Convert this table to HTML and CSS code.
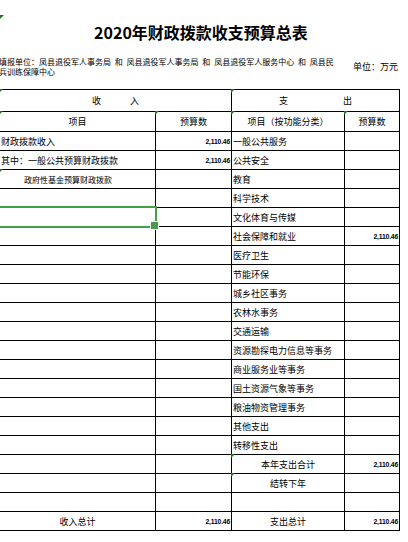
FILE: index.html
```html
<!DOCTYPE html>
<html lang="zh-CN">
<head>
<meta charset="utf-8">
<title>2020年财政拨款收支预算总表</title>
<link rel="stylesheet" href="styles.css">
</head>
<body>
<div class="sheet">
  <header class="head">
    <span class="mark"></span>
    <h1 class="title">2020年财政拨款收支预算总表</h1>
    <div class="info">
      <p class="unit-name">填报单位：凤县退役军人事务局 和 凤县退役军人事务局 和 凤县退役军人服务中心 和 凤县民<br>兵训练保障中心</p>
      <p class="unit">单位：万元</p>
    </div>
  </header>

  <div class="grid">
    <div class="c span2 hd tri"><span>收</span><span class="gap1">入</span></div>
    <div class="c span2 hd tri"><span>支</span><span class="gap2">出</span></div>

    <div class="c hd tri">项目</div>
    <div class="c hd tri">预算数</div>
    <div class="c hd tri">项目（按功能分类）</div>
    <div class="c hd tri">预算数</div>

    <div class="c l">财政拨款收入</div><div class="c num">2,110.46</div><div class="c l">一般公共服务</div><div class="c"></div>
    <div class="c l">其中：一般公共预算财政拨款</div><div class="c num">2,110.46</div><div class="c l">公共安全</div><div class="c"></div>
    <div class="c l sub tri">政府性基金预算财政拨款</div><div class="c"></div><div class="c l">教育</div><div class="c"></div>
    <div class="c"></div><div class="c"></div><div class="c l">科学技术</div><div class="c"></div>
    <div class="c sel"></div><div class="c"></div><div class="c l">文化体育与传媒</div><div class="c"></div>
    <div class="c"></div><div class="c"></div><div class="c l">社会保障和就业</div><div class="c num">2,110.46</div>
    <div class="c"></div><div class="c"></div><div class="c l">医疗卫生</div><div class="c"></div>
    <div class="c"></div><div class="c"></div><div class="c l">节能环保</div><div class="c"></div>
    <div class="c"></div><div class="c"></div><div class="c l">城乡社区事务</div><div class="c"></div>
    <div class="c"></div><div class="c"></div><div class="c l">农林水事务</div><div class="c"></div>
    <div class="c"></div><div class="c"></div><div class="c l">交通运输</div><div class="c"></div>
    <div class="c"></div><div class="c"></div><div class="c l">资源勘探电力信息等事务</div><div class="c"></div>
    <div class="c"></div><div class="c"></div><div class="c l">商业服务业等事务</div><div class="c"></div>
    <div class="c"></div><div class="c"></div><div class="c l">国土资源气象等事务</div><div class="c"></div>
    <div class="c"></div><div class="c"></div><div class="c l">粮油物资管理事务</div><div class="c"></div>
    <div class="c"></div><div class="c"></div><div class="c l">其他支出</div><div class="c"></div>
    <div class="c"></div><div class="c"></div><div class="c l">转移性支出</div><div class="c"></div>
    <div class="c"></div><div class="c"></div><div class="c ctr tri">本年支出合计</div><div class="c num">2,110.46</div>
    <div class="c"></div><div class="c"></div><div class="c ctr tri">结转下年</div><div class="c"></div>
    <div class="c"></div><div class="c"></div><div class="c"></div><div class="c"></div>
    <div class="c ctr">收入总计</div><div class="c num">2,110.46</div><div class="c ctr">支出总计</div><div class="c num">2,110.46</div>
  </div>
</div>
</body>
</html>
```

FILE: styles.css
```css
* { box-sizing: border-box; }

html, body {
  margin: 0;
  padding: 0;
  background: #fff;
}

body {
  font-family: "Noto Sans CJK SC", "Noto Sans", sans-serif;
  color: #000;
  width: 408px;
  height: 542px;
  overflow: hidden;
}

.sheet {
  width: 400px;
}

.head {
  position: relative;
  height: 89px;
  display: flex;
  flex-direction: column;
}

.mark {
  position: absolute;
  left: 0;
  top: 15px;
  width: 0;
  height: 0;
  border-style: solid;
  border-width: 4px 4px 0 0;
  border-color: #1a7f1a transparent transparent transparent;
}

.title {
  margin: 8px 0 0;
  height: 48px;
  display: flex;
  align-items: center;
  justify-content: center;
  font-size: 16px;
  font-weight: bold;
  line-height: 1;
  padding-left: 2px;
}

.info {
  height: 22px;
  display: flex;
  align-items: center;
}

.unit-name {
  margin: 0 0 0 -1px;
  font-size: 8px;
  line-height: 10px;
  word-spacing: 2px;
  white-space: nowrap;
}

.unit {
  margin: 0 2px 0 auto;
  font-size: 9px;
  line-height: 10px;
  white-space: nowrap;
}

.grid {
  display: grid;
  grid-template-columns: 155px 75px 112px 54px;
  grid-template-rows: 21px 19px repeat(21, 18px);
  gap: 1px;
  background: #000;
  padding: 1px 1px 1px 0;
  width: 400px;
}

.c {
  position: relative;
  background: #fff;
  font-size: 9px;
  line-height: 10px;
  display: flex;
  align-items: center;
  padding-top: 2px;
  white-space: nowrap;
  overflow: visible;
}

.span2 { grid-column: span 2; }

.hd {
  justify-content: center;
  padding-top: 0;
}

.hd .gap1 { margin-left: 29px; }
.hd .gap2 { margin-left: 55px; }

.l {
  padding-left: 1px;
}

.sub {
  padding-left: 24px;
  font-size: 8px;
}

.ctr {
  justify-content: center;
}

.num {
  justify-content: flex-end;
  padding-right: 1px;
  font-family: "Liberation Sans", Arial, sans-serif;
  font-size: 6.8px;
  font-weight: bold;
  letter-spacing: -0.2px;
}

.tri::before {
  content: "";
  position: absolute;
  left: -1px;
  top: -1px;
  width: 0;
  height: 0;
  border-style: solid;
  border-width: 4px 4px 0 0;
  border-color: #1a7f1a transparent transparent transparent;
  z-index: 1;
}

.sel {
  z-index: 2;
}

.sel::after {
  content: "";
  position: absolute;
  top: -2px;
  bottom: -2px;
  left: -3px;
  right: -2px;
  border: 2px solid #43a047;
}

.sel::before {
  content: "";
  position: absolute;
  right: -4px;
  bottom: -4px;
  width: 7px;
  height: 7px;
  background: #43a047;
  border: 1px solid #fff;
  z-index: 1;
}
```
